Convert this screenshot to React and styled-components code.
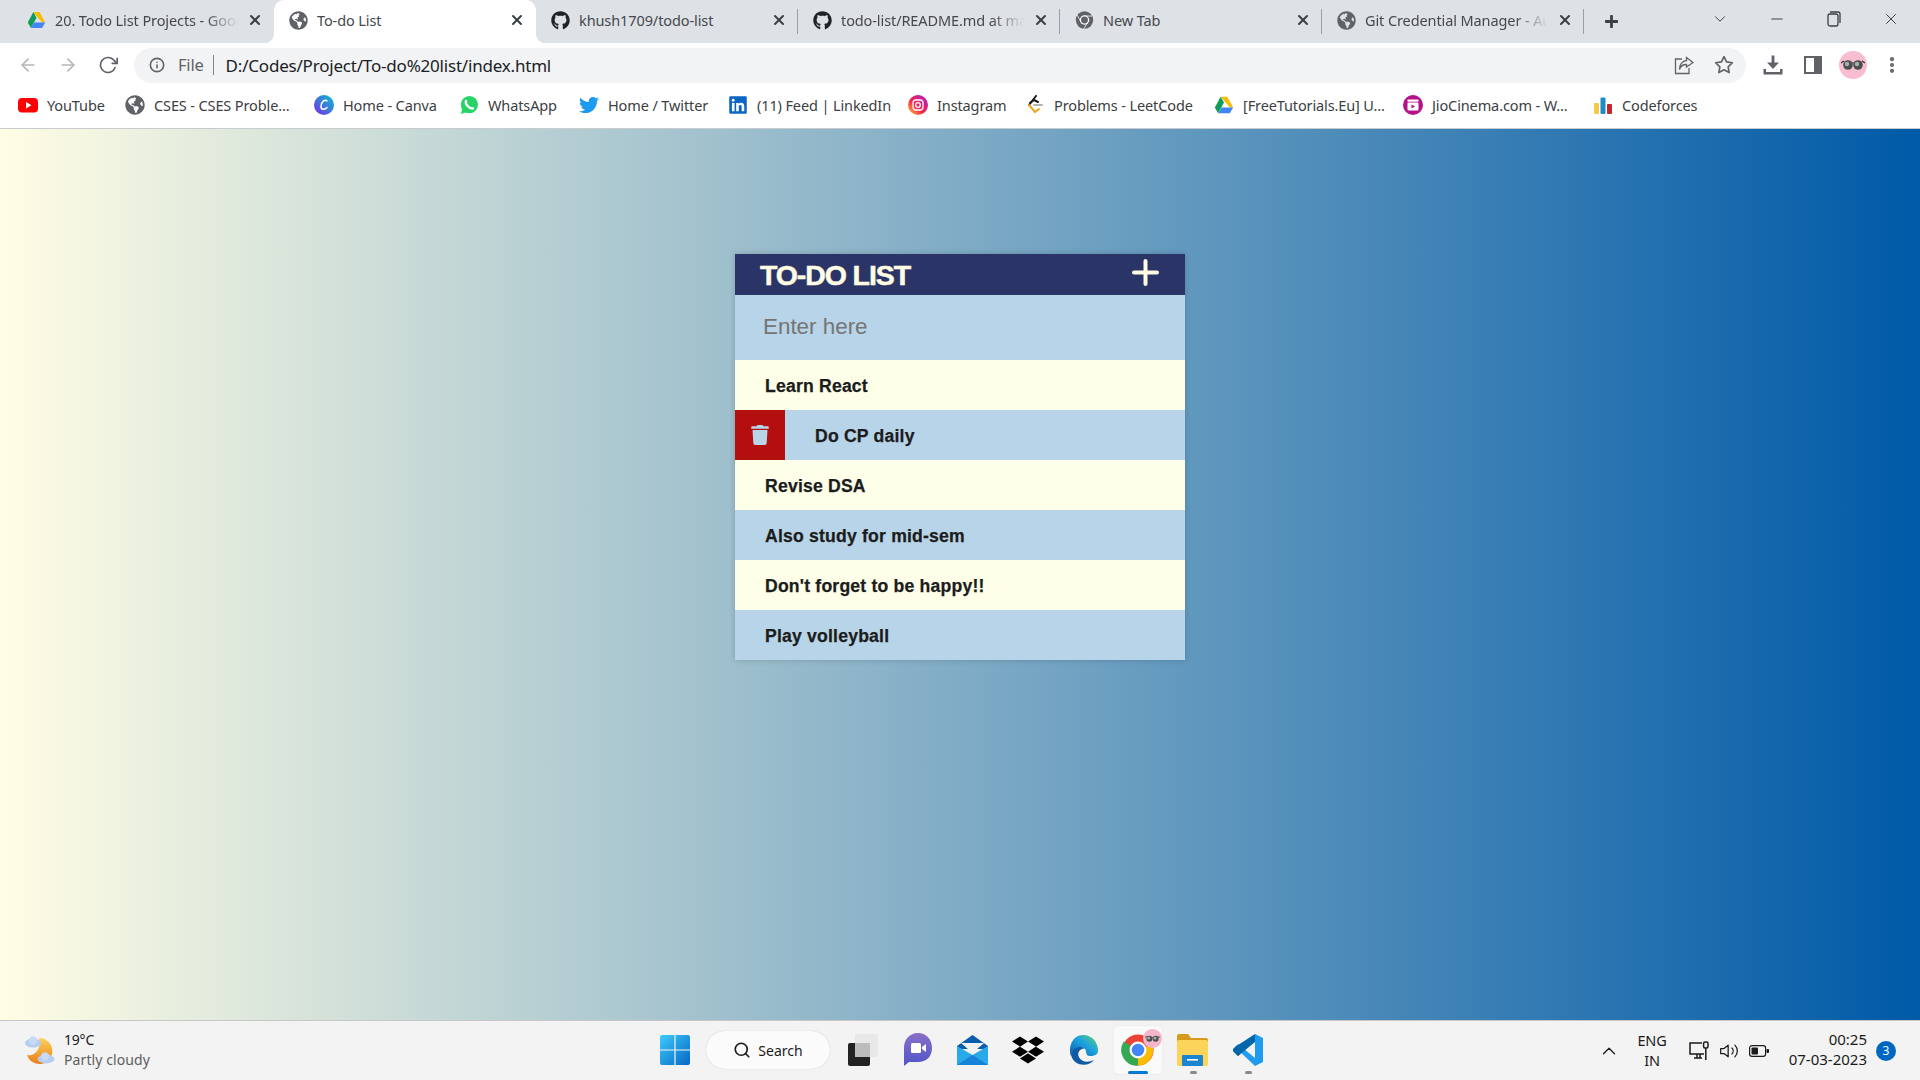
import React from "react";
import styled, { createGlobalStyle } from "styled-components";
import { FaGithub, FaGlobeAmericas, FaTwitter, FaLinkedin, FaDropbox, FaTrash, FaPlus } from "react-icons/fa";
import { FiX, FiMinus, FiChevronDown, FiArrowLeft, FiArrowRight, FiRotateCw, FiInfo, FiStar, FiMoreVertical, FiSearch, FiChevronUp, FiVolume2 } from "react-icons/fi";

const Global = createGlobalStyle`
  html, body { margin: 0; padding: 0; height: 100%; overflow: hidden; }
  #root { height: 100%; }
  * { box-sizing: border-box; }
  body { font-family: "Noto Sans", "Open Sans", sans-serif; }
`;

const Screen = styled.div`
  width: 1920px; height: 1080px; display: flex; flex-direction: column; overflow: hidden;
`;

/* ---------- tab strip ---------- */
const TabStrip = styled.div`
  height: 43px; flex: none; background: #dee1e6; display: flex; align-items: stretch; padding-left: 12px;
`;
const Tab = styled.div`
  position: relative; width: 262px; flex: none; display: flex; align-items: center; padding: 0 11px 3px 15px; gap: 9px;
  background: ${(p) => (p.$active ? "#fff" : "transparent")};
  border-radius: 10px 10px 0 0;
  color: #45484d;
  ${(p) => p.$sep && `&::after { content: ""; position: absolute; right: 0; top: 9px; bottom: 9px; width: 1px; background: #9aa0a6; }`}
  ${(p) => p.$active && `
    &::before { content: ""; position: absolute; left: -10px; bottom: 0; width: 10px; height: 10px;
      background: radial-gradient(circle at 0 0, transparent 10px, #fff 10.5px); }
    &::after { content: ""; position: absolute; right: -10px; bottom: 0; width: 10px; height: 10px;
      background: radial-gradient(circle at 100% 0, transparent 10px, #fff 10.5px); }
  `}
`;
const TabIcon = styled.span`
  width: 19px; height: 20px; flex: none; display: flex; align-items: center; justify-content: center; font-size: 19px;
  color: ${(p) => p.$color || "#5f6368"};
`;
const TabTitle = styled.span`
  flex: 1; min-width: 0; font-size: 14.5px; white-space: nowrap; overflow: hidden; letter-spacing: -0.1px;
  ${(p) => p.$fade && `-webkit-mask-image: linear-gradient(to right, #000 82%, transparent 100%); mask-image: linear-gradient(to right, #000 82%, transparent 100%);`}
`;
const TabClose = styled.span`
  width: 16px; flex: none; display: flex; justify-content: center; font-size: 16px; color: #3c4043;
  svg { stroke-width: 3; }
`;
const NewTab = styled.div`
  width: 52px; flex: none; display: flex; align-items: center; justify-content: center; font-size: 15px; color: #3c4043; padding: 0 0 0 2px;
`;
const WinControls = styled.div`
  margin-left: auto; display: flex; align-items: center; height: 38px; padding-right: 1px; color: #3c4043;
`;
const WinButton = styled.span`
  width: 57px; display: flex; align-items: center; justify-content: center; font-size: 18px;
  svg { stroke-width: 1.3; }
`;

/* ---------- toolbar ---------- */
const Toolbar = styled.div`
  height: 44px; flex: none; background: #fff; display: flex; align-items: center; padding: 0 17px 0 18px;
`;
const NavButton = styled.span`
  width: 20px; margin-right: ${(p) => p.$mr ?? 20}px; display: flex; justify-content: center; font-size: 20px;
  color: ${(p) => (p.$off ? "#b4b6b9" : "#5f6368")};
  svg { stroke-width: 2; }
`;
const AddressBar = styled.div`
  width: 1612px; margin-left: -1px; height: 35px; border-radius: 18px; background: #f1f3f4; display: flex; align-items: center; padding: 0 12px 0 14px;
`;
const InfoIcon = styled.span`
  width: 16px; display: flex; font-size: 16px; color: #5f6368; margin-right: 13px; margin-left: 1px; svg { stroke-width: 2.4; }
`;
const Scheme = styled.span`
  font-size: 16.5px; color: #5f6368; padding-right: 9px; border-right: 1px solid #80868b; line-height: 20px; letter-spacing: -0.2px;
`;
const Url = styled.span`
  font-size: 17px; color: #202124; margin-left: 12px; letter-spacing: -0.2px; white-space: nowrap;
`;
const BarActions = styled.div`
  margin-left: auto; display: flex; align-items: center; gap: 20px; color: #5f6368;
`;
const ToolIcons = styled.div`
  display: flex; align-items: center; color: #5f6368; margin-left: 17px; gap: 21px;
`;
const Avatar = styled.span`
  width: 28px; height: 28px; border-radius: 50%; background: #f9bdd0; display: flex; align-items: center; justify-content: center; flex: none; margin-left: -4px;
`;
const Kebab = styled.span`
  display: flex; font-size: 20px; margin-left: -6px; svg { stroke-width: 3; }
`;

/* ---------- bookmarks ---------- */
const Bookmarks = styled.div`
  height: 42px; flex: none; background: #fff; border-bottom: 1px solid #c9cccf; display: flex; align-items: center; padding: 0 0 5px 18px; gap: 21px;
`;
const Bookmark = styled.div`
  display: flex; align-items: center; gap: 9px; font-size: 14.5px; color: #3c4043;
`;
const BookmarkIcon = styled.span`
  width: 20px; height: 20px; flex: none; display: flex; align-items: center; justify-content: center; font-size: 20px;
  color: ${(p) => p.$color || "#5f6368"};
`;
const BookmarkLabel = styled.span`
  width: ${(p) => p.$w}px; white-space: nowrap; letter-spacing: -0.12px;
`;

/* ---------- page ---------- */
const Page = styled.main`
  flex: 1; min-height: 0; background: linear-gradient(to right, #fffde4, #005aa7); display: flex; justify-content: center; padding-top: 125px;
`;
const Card = styled.section`
  width: 450px; height: 406px; display: flex; flex-direction: column; box-shadow: 0 0 6px rgba(0, 0, 0, 0.18);
`;
const CardHeader = styled.header`
  height: 41px; flex: none; background: #2b3467; color: #fffde4; display: flex; align-items: center; justify-content: space-between; padding: 0 26px 0 25px;
`;
const CardTitle = styled.h1`
  margin: 0; font: 700 28.5px/41px "Liberation Sans", Arial, sans-serif; letter-spacing: -1.1px; padding-top: 1px; -webkit-text-stroke: 0.5px #fffde4;
`;
const AddIcon = styled.span`
  display: flex; margin-top: -4px;
`;
const EntryRow = styled.div`
  height: 65px; flex: none; background: #b8d4e8;
`;
const EntryInput = styled.input`
  width: 100%; height: 100%; border: 0; outline: 0; background: transparent; padding: 0 28px 2px;
  font: 400 22.4px "Liberation Sans", Arial, sans-serif; color: #222;
  &::placeholder { color: #757575; opacity: 1; }
`;
const TodoRow = styled.div`
  height: 50px; flex: none; display: flex; align-items: stretch;
  background: ${(p) => (p.$alt ? "#b8d4e8" : "#fdffe8")};
`;
const DeleteCell = styled.span`
  width: 50px; flex: none; background: #b30f0f; color: #b8d4e8; display: flex; align-items: center; justify-content: center; font-size: 20px;
`;
const TodoText = styled.span`
  padding: 2px 0 0 30px; display: flex; align-items: center; color: #1c1c1c;
  font: 700 17.6px "Liberation Sans", Arial, sans-serif; letter-spacing: 0.2px; white-space: nowrap; -webkit-text-stroke: 0.25px #1c1c1c;
`;

/* ---------- taskbar ---------- */
const Taskbar = styled.footer`
  height: 60px; flex: none; background: #f3f3f3; border-top: 1px solid #c6c6c6; display: grid; grid-template-columns: 660px auto 1fr; align-items: center;
`;
const Weather = styled.div`
  display: flex; align-items: center; padding-left: 24px; gap: 9px;
`;
const WeatherText = styled.div`
  display: flex; flex-direction: column; font-size: 14px; line-height: 20px; color: #1b1b1b; margin-top: -1px; letter-spacing: -0.2px;
`;
const Muted = styled.span`
  color: #5d5d5d; letter-spacing: 0.1px;
`;
const Center = styled.div`
  display: flex; align-items: center; margin-top: -1px;
`;
const SearchPill = styled.div`
  width: 124px; height: 38px; border-radius: 19px; background: #fbfbfb; box-shadow: 0 0 1px rgba(0, 0, 0, 0.25); margin: 0 5px 0 16px;
  display: flex; align-items: center; justify-content: center; gap: 7px; font-size: 14px; color: #1b1b1b;
  svg { font-size: 18px; stroke-width: 2.2; }
`;
const AppCell = styled.div`
  position: relative; width: 55px; height: 48px; display: flex; align-items: center; justify-content: center;
  ${(p) => p.$on && `&::before { content: ""; position: absolute; left: 4px; right: 3px; top: 0; bottom: 0; background: #fafafa; border-radius: 4px; box-shadow: 0 0 1px rgba(0,0,0,.2); }`}
  > * { position: relative; }
  ${(p) => p.$dot && `&::after { content: ""; position: absolute; bottom: 0; left: 50%; height: 3px; border-radius: 2px;
    width: ${p.$on ? 20 : 7}px; margin-left: ${p.$on ? -10 : -3}px; background: ${p.$on ? "#0078d4" : "#8a8a8a"}; }`}
`;
const ChromeWrap = styled.span`
  display: flex; position: relative;
`;
const ProfileBadge = styled.span`
  position: absolute; right: -7px; top: -4px; width: 19px; height: 19px; border-radius: 50%; background: #f4b6c8; display: flex; align-items: center; justify-content: center;
`;
const Tray = styled.div`
  display: flex; align-items: center; justify-content: flex-end; padding-right: 24px; color: #1b1b1b;
`;
const TrayIcon = styled.span`
  display: flex; width: ${(p) => p.$w || 20}px; margin-left: ${(p) => p.$ml || 0}px; justify-content: center; font-size: ${(p) => p.$w || 20}px;
  svg { stroke-width: ${(p) => (p.$w ? 1.4 : 1.5)}; }
`;
const Lang = styled.div`
  width: 32px; margin: -2px 0 0 16px; text-align: center; font-size: 14.5px; line-height: 20px; letter-spacing: -0.2px;
`;
const Clock = styled.div`
  width: 90px; margin: -3px 0 0 8px; text-align: right; font-size: 15px; line-height: 20px;
`;
const Badge = styled.span`
  width: 20px; height: 20px; margin-left: 9px; border-radius: 50%; background: #0067c0; color: #fff; font-size: 12px; display: flex; align-items: center; justify-content: center;
`;

/* ---------- drawings ---------- */
const Drive = ({ s = 20 }) => (
  <svg width={s} height={s} viewBox="0 0 24 24">
    <polygon points="8,2 16,2 23,15 19,15" fill="#fbbc04" />
    <polygon points="8,2 12,9 5,22 1,15" fill="#0f9d58" />
    <polygon points="5,22 9,15 23,15 19,22" fill="#4285f4" />
  </svg>
);
const Chrome = ({ s = 20, mono }) => (
  <svg width={s} height={s} viewBox="0 0 24 24">
    <circle cx="12" cy="12" r="11" fill={mono ? "#5f6368" : "#ea4335"} />
    {!mono && <path d="M12 12 L22 8 A11 11 0 0 1 12 23 Z" fill="#fbbc04" />}
    {!mono && <path d="M12 12 L12 23 A11 11 0 0 1 2 6 Z" fill="#34a853" />}
    {mono && <path d="M12 7 H22 M7.7 14.5 L2.7 5.8 M16.3 14.5 L11.3 23" stroke="#fff" strokeWidth="1" />}
    <circle cx="12" cy="12" r="6" fill="#fff" />
    <circle cx="12" cy="12" r="4.4" fill={mono ? "#5f6368" : "#4285f4"} />
  </svg>
);
const YouTube = () => (
  <svg width="20" height="20" viewBox="0 0 20 20">
    <rect y="3" width="20" height="14.5" rx="4" fill="#f00" />
    <polygon points="8,7 8,13.5 13.5,10.2" fill="#fff" />
  </svg>
);
const Canva = () => (
  <svg width="20" height="20" viewBox="0 0 20 20">
    <defs><linearGradient id="cv" x1="0" y1="1" x2="1" y2="0"><stop offset="0" stopColor="#7d2ae8" /><stop offset="1" stopColor="#00c4cc" /></linearGradient></defs>
    <circle cx="10" cy="10" r="10" fill="url(#cv)" />
    <path d="M13 6 C11 3.5 7 7 7 11.5 C7 15 11 15 13 12.5" fill="none" stroke="#fff" strokeWidth="1.5" strokeLinecap="round" />
  </svg>
);
const WhatsApp = () => (
  <svg width="20" height="20" viewBox="0 0 20 20">
    <circle cx="10.4" cy="9.6" r="8.6" fill="#25d366" />
    <polygon points="2,19 3.5,12 8,17" fill="#25d366" />
    <path d="M7 6 C6 9 10 14 14 13.4" fill="none" stroke="#fff" strokeWidth="2.4" strokeLinecap="round" />
  </svg>
);
const Instagram = () => (
  <svg width="20" height="20" viewBox="0 0 20 20">
    <defs><linearGradient id="ig" x1="0" y1="1" x2="1" y2="0"><stop offset="0" stopColor="#fec43c" /><stop offset=".45" stopColor="#f4224d" /><stop offset="1" stopColor="#a01fd6" /></linearGradient></defs>
    <circle cx="10" cy="10" r="10" fill="url(#ig)" />
    <rect x="5" y="5" width="10" height="10" rx="3" fill="none" stroke="#fff" strokeWidth="1.3" />
    <circle cx="10" cy="10" r="2.3" fill="none" stroke="#fff" strokeWidth="1.3" />
  </svg>
);
const LeetCode = () => (
  <svg width="20" height="20" viewBox="0 0 20 20">
    <path d="M11 1 L4 10" stroke="#1a1a1a" strokeWidth="2" strokeLinecap="round" />
    <path d="M4 10 L10 17" stroke="#f0a31e" strokeWidth="2" strokeLinecap="round" fill="none" />
    <path d="M10 17 L14 14" stroke="#f0a31e" strokeWidth="2" strokeLinecap="round" />
    <path d="M9 10 H17" stroke="#b3b3b3" strokeWidth="2" strokeLinecap="round" />
    <path d="M5 8 L9 5 L13 7" stroke="#1a1a1a" strokeWidth="2" fill="none" strokeLinecap="round" />
  </svg>
);
const Jio = () => (
  <svg width="20" height="20" viewBox="0 0 20 20">
    <circle cx="10" cy="10" r="10" fill="#b5128a" />
    <rect x="4.5" y="7.5" width="11" height="8" rx="1" fill="#fff" />
    <rect x="4.5" y="4.5" width="11" height="2.2" fill="#fff" />
    <polygon points="8.5,9.5 8.5,13.5 12,11.5" fill="#b5128a" />
  </svg>
);
const Codeforces = () => (
  <svg width="20" height="20" viewBox="0 0 20 20">
    <rect x="1" y="8" width="5" height="11" rx="1" fill="#f9c846" />
    <rect x="7.5" y="2.5" width="5" height="16.5" rx="1" fill="#1f8acb" />
    <rect x="14" y="9" width="5" height="10" rx="1" fill="#c4262e" />
  </svg>
);
const Share = () => (
  <svg width="20" height="20" viewBox="0 0 20 20" fill="none" stroke="#5f6368" strokeWidth="1.3">
    <path d="M8 4 H1.5 V18.5 H15 V13" />
    <path d="M12.5 2.5 L19 7.5 L12.5 12 V9.5 C9 9.5 6.5 11 5.5 14.5 C5.5 10 8 6 12.5 5.5 Z" />
  </svg>
);
const Download = () => (
  <svg width="20" height="20" viewBox="0 0 20 20" fill="#5f6368">
    <rect x="8.6" y="0.5" width="2.8" height="9" /><polygon points="4,7.5 16,7.5 10,14" />
    <path d="M0.5 14 H3 V17 H17 V14 H19.5 V19.5 H0.5 Z" />
  </svg>
);
const SidePanel = () => (
  <svg width="18" height="20" viewBox="0 0 18 20">
    <rect x="1" y="2" width="16" height="16" fill="none" stroke="#5f6368" strokeWidth="2" />
    <rect x="10" y="2" width="7" height="16" fill="#5f6368" />
  </svg>
);
const Shades = ({ w = 24 }) => (
  <svg width={w} height={w * 0.5} viewBox="0 0 24 12">
    <path d="M0 4 L3 2 M24 4 L21 2 M10 4 H14" stroke="#333" strokeWidth="1.2" />
    <circle cx="7" cy="6" r="4.8" fill="#4a5050" /><circle cx="17" cy="6" r="4.8" fill="#4a5050" />
    <circle cx="6" cy="5" r="2.2" fill="#a5b0b0" /><circle cx="16" cy="5" r="2.2" fill="#a5b0b0" />
  </svg>
);
const WeatherArt = () => (
  <svg width="31" height="32" viewBox="0 0 31 32">
    <defs><linearGradient id="mn" x1="0" y1="0" x2="0" y2="1"><stop offset="0" stopColor="#fbd35a" /><stop offset="1" stopColor="#ec7d1c" /></linearGradient></defs>
    <path d="M15 3 A13 13 0 1 1 3 20 C11 22 18 13 15 3 Z" fill="url(#mn)" />
    <ellipse cx="9" cy="8" rx="8" ry="4.6" fill="#b5cdf0" /><circle cx="9" cy="5.5" r="4.2" fill="#c8daf5" />
    <ellipse cx="22" cy="24" rx="8.5" ry="4.4" fill="#b5cdf0" /><circle cx="21" cy="21.5" r="4.2" fill="#c8daf5" />
  </svg>
);
const WinLogo = () => (
  <svg width="30" height="30" viewBox="0 0 30 30">
    <defs><linearGradient id="wl" x1="0" y1="0" x2="1" y2="1"><stop offset="0" stopColor="#3ecbfb" /><stop offset="1" stopColor="#0567c4" /></linearGradient></defs>
    <path d="M2 0 H14.4 V14.4 H0 V2 A2 2 0 0 1 2 0Z M15.6 0 H28 A2 2 0 0 1 30 2 V14.4 H15.6Z M0 15.6 H14.4 V30 H2 A2 2 0 0 1 0 28Z M15.6 15.6 H30 V28 A2 2 0 0 1 28 30 H15.6Z" fill="url(#wl)" />
  </svg>
);
const TaskView = () => (
  <svg width="30" height="32" viewBox="0 0 30 32">
    <rect x="0" y="9" width="22" height="23" rx="2" fill="#222" />
    <rect x="7" y="0" width="23" height="23" rx="2" fill="#e8e8e8" />
    <rect x="7" y="9" width="15" height="14" fill="#bcbcbc" />
  </svg>
);
const Chat = () => (
  <svg width="30" height="34" viewBox="0 0 30 34">
    <defs><linearGradient id="ct" x1="0" y1="0" x2="0" y2="1"><stop offset="0" stopColor="#8a6fc8" /><stop offset="1" stopColor="#4f55c8" /></linearGradient></defs>
    <path d="M15 0 C24 0 29 7 29 15 C29 24 23 29 15 29 H6 L1 33 V15 C1 7 6 0 15 0Z" fill="url(#ct)" />
    <rect x="8" y="10" width="10" height="10" rx="1.5" fill="#fff" /><polygon points="19,14 23,11 23,19 19,16" fill="#fff" />
  </svg>
);
const Mail = () => (
  <svg width="31" height="30" viewBox="0 0 31 30">
    <polygon points="15.5,0 31,11 31,14 0,14 0,11" fill="#0b5cad" />
    <polygon points="4,8 27,8 15.5,18" fill="#f2f2f2" />
    <polygon points="0,11 15.5,20 31,11 31,30 0,30" fill="#29a8ea" />
    <polygon points="0,30 15.5,20 31,30" fill="#1483d8" />
  </svg>
);
const Edge = () => (
  <svg width="30" height="32" viewBox="0 0 30 32">
    <defs><linearGradient id="eg" x1="0" y1="1" x2="1" y2="0"><stop offset="0" stopColor="#0c59a4" /><stop offset=".55" stopColor="#1ba1e2" /><stop offset="1" stopColor="#5dd36b" /></linearGradient></defs>
    <path d="M15 1 C25 1 30 9 30 17 C30 20 27 22 22 22 C17 22 19 17 17 15 C13 11 5 14 3 22 C0 14 4 1 15 1Z M1 18 Z" fill="url(#eg)" />
    <path d="M3 21 C5 13 13 11 17 15 C13 14 9 18 11 23 C13 28 20 29 26 26 C21 33 6 33 3 21Z" fill="#0f5aa5" />
    <path d="M11 23 C9 18 13 14 17 15 C15 17 15 21 18 22.5 C16 25 12 25 11 23Z" fill="#f3f3f3" />
  </svg>
);
const Folder = () => (
  <svg width="31" height="32" viewBox="0 0 31 32">
    <path d="M0 2 A2 2 0 0 1 2 0 H11 L14 4 H29 A2 2 0 0 1 31 6 V10 H0Z" fill="#d69a1c" />
    <rect y="6" width="31" height="26" rx="2" fill="#fcd45a" />
    <rect x="5" y="21" width="21" height="11" rx="1" fill="#1a85d0" /><rect x="10" y="25" width="11" height="1.6" fill="#fff" />
  </svg>
);
const VSCode = () => (
  <svg width="30" height="32" viewBox="0 0 30 32">
    <polygon points="22,0 30,4 30,28 22,32 2,13 5,10 22,24" fill="#1f9cf0" />
    <polygon points="22,0 22,8 5,22 2,19 0,17 0,15 2,13" fill="#0065a9" />
    <polygon points="0,17 2,19 5,22 8,19 2,14" fill="#0065a9" />
  </svg>
);
const Network = () => (
  <svg width="20" height="20" viewBox="0 0 20 20" fill="none" stroke="#1b1b1b" strokeWidth="1.1">
    <path d="M13 2 H1 V13 H15" /><path d="M5 17 H13 M8 13 V17 M11 13 V17" />
    <rect x="14.6" y="1" width="4.4" height="6" rx="1.5" /><path d="M16.8 7 V19" />
  </svg>
);
const Battery = () => (
  <svg width="20" height="14" viewBox="0 0 20 14">
    <rect x="0.6" y="1.6" width="16" height="10.8" rx="2.4" fill="none" stroke="#1b1b1b" strokeWidth="1.2" />
    <rect x="2.5" y="3.5" width="6.5" height="7" rx="1" fill="#1b1b1b" /><rect x="17.5" y="5" width="2.5" height="4" rx="1" fill="#1b1b1b" />
  </svg>
);
const PlusMark = () => (
  <svg width="27" height="27" viewBox="0 0 27 27">
    <path d="M13.5 2 V25 M2 13.5 H25" stroke="#fffde4" strokeWidth="4" strokeLinecap="round" />
  </svg>
);

const tabs = [
  { title: "20. Todo List Projects - Google Slides", icon: <Drive />, fade: true },
  { title: "To-do List", icon: <FaGlobeAmericas />, active: true },
  { title: "khush1709/todo-list", icon: <FaGithub />, color: "#202326", sep: true },
  { title: "todo-list/README.md at main", icon: <FaGithub />, color: "#202326", fade: true, sep: true },
  { title: "New Tab", icon: <Chrome mono />, sep: true },
  { title: "Git Credential Manager - Authentication", icon: <FaGlobeAmericas />, fade: true, sep: true },
];
const marks = [
  { label: "YouTube", w: 57, icon: <YouTube /> },
  { label: "CSES - CSES Proble...", w: 139, icon: <FaGlobeAmericas /> },
  { label: "Home - Canva", w: 95, icon: <Canva /> },
  { label: "WhatsApp", w: 70, icon: <WhatsApp /> },
  { label: "Home / Twitter", w: 99, icon: <FaTwitter />, color: "#1d9bf0" },
  { label: "(11) Feed | LinkedIn", w: 130, icon: <FaLinkedin />, color: "#0a66c2" },
  { label: "Instagram", w: 67, icon: <Instagram /> },
  { label: "Problems - LeetCode", w: 139, icon: <LeetCode /> },
  { label: "[FreeTutorials.Eu] U...", w: 139, icon: <Drive /> },
  { label: "JioCinema.com - W...", w: 140, icon: <Jio /> },
  { label: "Codeforces", w: 75, icon: <Codeforces /> },
];
const todos = ["Learn React", "Do CP daily", "Revise DSA", "Also study for mid-sem", "Don't forget to be happy!!", "Play volleyball"];

export default function App() {
  return (
    <Screen>
      <Global />
      <TabStrip>
        {tabs.map((t) => (
          <Tab key={t.title} $active={t.active} $sep={t.sep}>
            <TabIcon $color={t.color}>{t.icon}</TabIcon>
            <TabTitle $fade={t.fade}>{t.title}</TabTitle>
            <TabClose><FiX /></TabClose>
          </Tab>
        ))}
        <NewTab><FaPlus /></NewTab>
        <WinControls>
          <WinButton><FiChevronDown /></WinButton>
          <WinButton><FiMinus /></WinButton>
          <WinButton>
            <svg width="14" height="16" viewBox="0 0 14 16" fill="none" stroke="#3c4043" strokeWidth="1.1">
              <rect x="1" y="3" width="10" height="12" rx="2" /><path d="M3 1 H11 A2 2 0 0 1 13 3 V12" />
            </svg>
          </WinButton>
          <WinButton><FiX /></WinButton>
        </WinControls>
      </TabStrip>

      <Toolbar>
        <NavButton $off><FiArrowLeft /></NavButton>
        <NavButton $off><FiArrowRight /></NavButton>
        <NavButton $mr={17}><FiRotateCw /></NavButton>
        <AddressBar>
          <InfoIcon><FiInfo /></InfoIcon>
          <Scheme>File</Scheme>
          <Url>D:/Codes/Project/To-do%20list/index.html</Url>
          <BarActions>
            <Share />
            <NavButton $mr={0}><FiStar /></NavButton>
          </BarActions>
        </AddressBar>
        <ToolIcons>
          <Download />
          <SidePanel />
          <Avatar><Shades /></Avatar>
          <Kebab><FiMoreVertical /></Kebab>
        </ToolIcons>
      </Toolbar>

      <Bookmarks>
        {marks.map((m) => (
          <Bookmark key={m.label}>
            <BookmarkIcon $color={m.color}>{m.icon}</BookmarkIcon>
            <BookmarkLabel $w={m.w}>{m.label}</BookmarkLabel>
          </Bookmark>
        ))}
      </Bookmarks>

      <Page>
        <Card>
          <CardHeader>
            <CardTitle>TO-DO LIST</CardTitle>
            <AddIcon><PlusMark /></AddIcon>
          </CardHeader>
          <EntryRow><EntryInput placeholder="Enter here" /></EntryRow>
          {todos.map((t, i) => (
            <TodoRow key={t} $alt={i % 2 === 1}>
              {i === 1 && <DeleteCell><FaTrash /></DeleteCell>}
              <TodoText>{t}</TodoText>
            </TodoRow>
          ))}
        </Card>
      </Page>

      <Taskbar>
        <Weather>
          <WeatherArt />
          <WeatherText>
            <span>19°C</span>
            <Muted>Partly cloudy</Muted>
          </WeatherText>
        </Weather>
        <Center>
          <WinLogo />
          <SearchPill><FiSearch />Search</SearchPill>
          <AppCell><TaskView /></AppCell>
          <AppCell><Chat /></AppCell>
          <AppCell><Mail /></AppCell>
          <AppCell><FaDropbox size={32} color="#000" /></AppCell>
          <AppCell><Edge /></AppCell>
          <AppCell $on $dot>
            <ChromeWrap>
              <Chrome s={34} />
              <ProfileBadge><Shades w={15} /></ProfileBadge>
            </ChromeWrap>
          </AppCell>
          <AppCell $dot><Folder /></AppCell>
          <AppCell $dot><VSCode /></AppCell>
        </Center>
        <Tray>
          <TrayIcon $w={22}><FiChevronUp /></TrayIcon>
          <Lang>ENG<br />IN</Lang>
          <TrayIcon $ml={21}><Network /></TrayIcon>
          <TrayIcon $ml={10}><FiVolume2 /></TrayIcon>
          <TrayIcon $ml={10}><Battery /></TrayIcon>
          <Clock>00:25<br />07-03-2023</Clock>
          <Badge>3</Badge>
        </Tray>
      </Taskbar>
    </Screen>
  );
}
